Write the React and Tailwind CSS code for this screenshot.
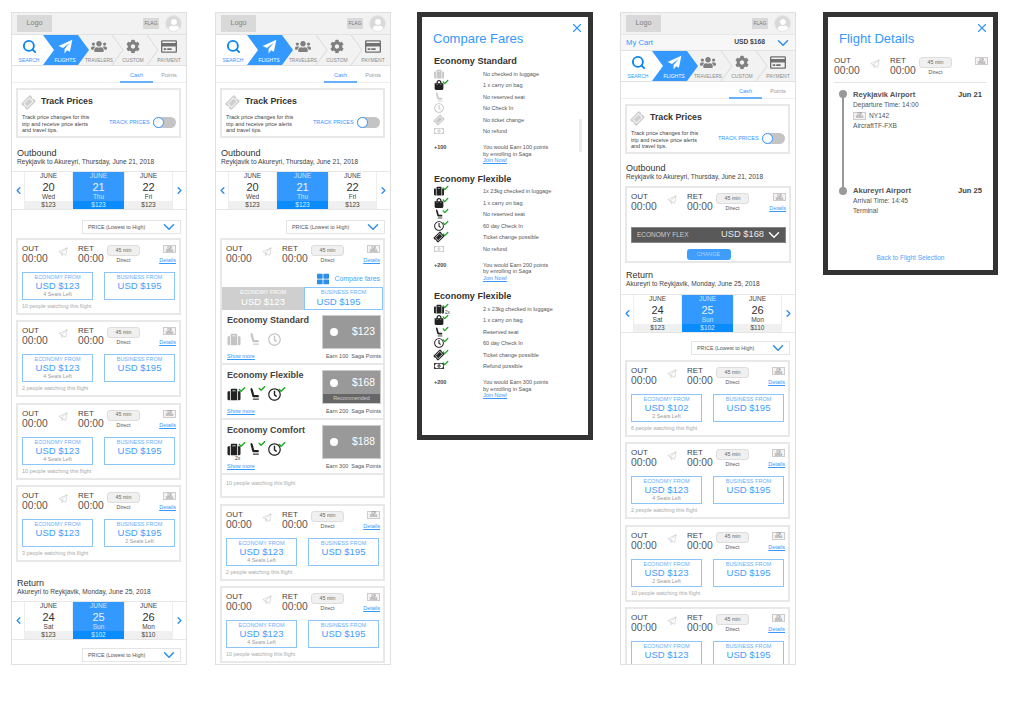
import React from "react";
import { Search, X, ChevronDown, ChevronLeft, ChevronRight } from "lucide-react";
import { FaUsers, FaCog, FaRegCreditCard, FaSuitcase, FaShoppingBag, FaRegClock, FaTicketAlt, FaRegMoneyBillAlt, FaCheck, FaUser, FaThLarge } from "react-icons/fa";

const PlaneFill = ({ className }) => (
  <svg viewBox="0 0 24 24" className={className} fill="currentColor"><path d="M23 1 L1 11 L8 14.5 L19 6 L10.5 16 L10.5 23 L14.5 18 L19 20.5 Z" /></svg>
);
const PlaneLine = ({ className }) => (
  <svg viewBox="0 0 24 24" className={className} fill="none" stroke="currentColor" strokeWidth="1.4" strokeLinejoin="round"><path d="M22 2 L2 11 L8 14 L18.5 20 Z M22 2 L8 14 L10 21 L13 16.5" /></svg>
);
const Seat = ({ className }) => (
  <svg viewBox="0 0 24 24" className={className} fill="currentColor">
    <path d="M6 1 C7.5 1 8.5 2.5 9 4.5 L11.5 14 L18 14 C20 14 20.5 16 19.5 18 L10.5 18 C9 18 8.3 17 8 16 L4.8 4.5 C4.4 2.8 5 1 6 1 Z" />
    <path d="M9 20.5 H20 V22.5 H9 Z" />
  </svg>
);

function Header() {
  return (
    <div className="flex items-center h-[21px] bg-[#f2f2f2] pl-[5px] pr-[4px]">
      <div className="w-[35px] h-[17px] bg-[#d9d9d9] flex items-center justify-center text-[7.2px] text-[#808080]">Logo</div>
      <div className="ml-auto w-[16px] h-[11px] bg-[#d9d9d9] flex items-center justify-center text-[5px] text-[#777]">FLAG</div>
      <div className="ml-[6px] w-[17px] h-[17px] rounded-full bg-[#d9d9d9] border border-[#e8e8e8] flex items-end justify-center overflow-hidden">
        <FaUser className="w-[12px] h-[12px] text-white" />
      </div>
    </div>
  );
}

function Cart() {
  return (
    <div className="flex items-center h-[16px] bg-[#f7f7f7] pl-[5px] pr-[3px] border-t border-[#e6e6e6]">
      <span className="text-[7.7px] text-[#3399ff]">My Cart</span>
      <span className="ml-auto text-[6.7px] font-bold text-[#444]">USD $168</span>
      <ChevronDown className="ml-[9px] w-[18px] h-[18px] shrink-0 text-[#2e8fe8]" strokeWidth={2} />
    </div>
  );
}

const stepCell = "flex flex-col items-center relative z-10 whitespace-nowrap pt-[4px]";
function Steps() {
  return (
    <div className="relative h-[32px] bg-[#f2f2f2] border-y border-[#e2e2e2] flex">
      <svg viewBox="0 0 174 30" preserveAspectRatio="none" className="absolute inset-0 w-full h-full" fill="none">
        <polygon points="0,0 31,0 42,15 31,30 0,30" fill="#fff" />
        <polygon points="31,0 66,0 77,15 66,30 31,30 42,15" fill="#3399ff" />
        <polyline points="100,0 111,15 100,30" stroke="#d4d4d4" strokeWidth="0.8" />
        <polyline points="135,0 146,15 135,30" stroke="#d4d4d4" strokeWidth="0.8" />
      </svg>
      <div className={`${stepCell} w-[34px]`}>
        <Search className="w-[15px] h-[15px] text-[#0a84f0]" strokeWidth={3} />
        <span className="text-[5px] mt-[3px] text-[#3399ff]">SEARCH</span>
      </div>
      <div className={`${stepCell} w-[38px]`}>
        <PlaneFill className="w-[15px] h-[15px] text-white" />
        <span className="text-[5px] mt-[3px] text-white">FLIGHTS</span>
      </div>
      <div className={`${stepCell} w-[30px]`}>
        <FaUsers className="w-[16px] h-[15px] text-[#808080]" />
        <span className="text-[4.8px] mt-[3px] text-[#8a8a8a]">TRAVELERS</span>
      </div>
      <div className={`${stepCell} w-[38px]`}>
        <FaCog className="w-[14px] h-[15px] text-[#808080]" />
        <span className="text-[5px] mt-[3px] text-[#8a8a8a]">CUSTOM</span>
      </div>
      <div className={`${stepCell} w-[34px]`}>
        <FaRegCreditCard className="w-[16px] h-[15px] text-[#707070]" />
        <span className="text-[5px] mt-[3px] text-[#8a8a8a]">PAYMENT</span>
      </div>
    </div>
  );
}

function Tabs() {
  return (
    <div className="flex justify-end h-[16px] border-b border-[#efefef] mt-[1px] pr-[1px]">
      <div className="w-[33px] h-[16px] border-b-2 border-[#66b0fb] text-[5.6px] text-[#3399ff] text-center pt-[4px]">Cash</div>
      <div className="w-[32px] text-[5.6px] text-[#999] text-center pt-[4px]">Points</div>
    </div>
  );
}

function Track({ className }) {
  return (
    <div className={`mx-[4px] w-[165px] h-[50px] border-2 border-[#e8e8e8] pl-[4px] pr-[3px] pt-[5px] ${className}`}>
      <div className="flex items-center h-[14px]">
        <FaTicketAlt className="w-[13px] h-[13px] text-[#cfcfcf] -rotate-45" />
        <span className="ml-[6px] text-[8.8px] font-bold text-[#333]">Track Prices</span>
      </div>
      <div className="flex items-start mt-[5px]">
        <p className="w-[74px] text-[5.5px] leading-[6.5px] text-[#444]">Track price changes for this trip and receive price alerts and travel tips.</p>
        <span className="ml-[13px] mt-[4px] text-[5.5px] text-[#3399ff] whitespace-nowrap">TRACK PRICES</span>
        <div className="ml-auto mt-[3px] w-[23px] h-[11px] bg-[#c4c4c4] rounded-full relative">
          <div className="absolute left-0 top-0 w-[11px] h-[11px] rounded-full bg-white border border-[#3399ff]" />
        </div>
      </div>
    </div>
  );
}

function Heading({ title, sub, className }) {
  return (
    <div className={`pl-[5px] ${className}`}>
      <div className="text-[9px] leading-[10px] text-[#333]">{title}</div>
      <div className="text-[6.6px] leading-[8px] text-[#444]">{sub}</div>
    </div>
  );
}

function Strip({ days, className }) {
  return (
    <div className={`flex h-[38px] border-t border-[#e6e6e6] shadow-[0_1px_0_#e6e6e6] ${className}`}>
      <div className="w-[12px] flex items-center justify-center"><ChevronLeft className="w-[11px] h-[11px] text-[#2e8fe8]" strokeWidth={3} /></div>
      {days.map((d) => (
        <div key={d.n} className={`flex flex-col items-center ${d.on ? "w-[51px] bg-[#3399ff] text-[#cfe6ff]" : "w-[49px] text-[#444] border-x border-[#eee]"}`}>
          <div className="text-[6.5px] leading-[8px]">JUNE</div>
          <div className={`text-[11px] leading-[12px] mt-[1px] ${d.on ? "text-[#eaf4ff]" : "text-[#333]"}`}>{d.n}</div>
          <div className="text-[6.5px] leading-[8px]">{d.w}</div>
          <div className={`w-full text-center text-[6.5px] leading-[8px] ${d.on ? "bg-[#0a8cff] text-[#d8ecff]" : "bg-[#f0f0f0] text-[#444]"}`}>{d.p}</div>
        </div>
      ))}
      <div className="w-[13px] flex items-center justify-center"><ChevronRight className="w-[11px] h-[11px] text-[#2e8fe8]" strokeWidth={3} /></div>
    </div>
  );
}

function Sort({ className }) {
  return (
    <div className={`ml-auto mr-[5px] w-[99px] h-[14px] border border-[#e4e4e4] flex items-center pl-[5px] pr-[2px] ${className}`}>
      <span className="text-[5.4px] text-[#555] whitespace-nowrap">PRICE (Lowest to High)</span>
      <ChevronDown className="ml-auto w-[18px] h-[18px] shrink-0 text-[#2e8fe8]" strokeWidth={2} />
    </div>
  );
}

function LogoBox({ className = "" }) {
  return (
    <div className={`w-[13px] h-[8px] border border-[#ccc] bg-[#f4f4f4] text-[2.8px] leading-[3px] text-[#666] text-center pt-[0.5px] ${className}`}>ICE<br />WING</div>
  );
}

function Times({ details = true }) {
  return (
    <div className="flex">
      <div className="w-[34px]">
        <div className="text-[8px] leading-[9px] text-[#444]">OUT</div>
        <div className="text-[10.3px] leading-[12px] text-[#555]">00:00</div>
      </div>
      <div className="w-[22px] pl-[2px] pt-[3px]"><PlaneLine className="w-[10px] h-[10px] text-[#c4c4c4]" /></div>
      <div className="w-[29px]">
        <div className="text-[8px] leading-[9px] text-[#444]">RET</div>
        <div className="text-[10.3px] leading-[12px] text-[#555]">00:00</div>
      </div>
      <div className="w-[33px] flex flex-col items-center pt-[1px]">
        <div className="w-[33px] h-[11px] rounded-[3px] bg-[#f0f0f0] border border-[#ddd] text-[5.3px] text-[#666] flex items-center justify-center">45 min</div>
        <div className="text-[5.3px] leading-[7px] mt-[1px] text-[#555]">Direct</div>
      </div>
      <div className="ml-auto flex flex-col items-end pt-[1px]">
        <LogoBox />
        {details && <div className="text-[5.5px] leading-[7px] mt-[4px] text-[#3399ff] underline">Details</div>}
      </div>
    </div>
  );
}

function Fare({ label, price, seats }) {
  return (
    <div className="w-[71px] h-[28px] border-[1.5px] border-[#8cc4fc] text-center pt-[1px]">
      <div className="text-[5.5px] leading-[7px] text-[#66b0fb]">{label}</div>
      <div className="text-[9.5px] leading-[10px] text-[#3f9dfb]">{price}</div>
      {seats && <div className="text-[5.3px] leading-[7px] text-[#999]">{seats}</div>}
    </div>
  );
}

function Flight({ eco = "USD $123", ecoSeats = "4 Seats Left", busSeats, people }) {
  return (
    <div className="mx-[4px] w-[165px] h-[77px] border-2 border-[#e8e8e8] pl-[4px] pr-[3px] pt-[4px] shrink-0">
      <Times />
      <div className="flex gap-[11px] mt-[7px]">
        <Fare label="ECONOMY FROM" price={eco} seats={ecoSeats} />
        <Fare label="BUSINESS FROM" price="USD $195" seats={busSeats} />
      </div>
      {people && <div className="text-[5.4px] leading-[8px] mt-[2px] text-[#aaa] whitespace-nowrap">{people}</div>}
    </div>
  );
}

const Checked = ({ children }) => (
  <span className="relative inline-flex">
    {children}
    <FaCheck className="absolute -right-[5px] -top-[2px] w-[8px] h-[7px] text-[#17a81f]" />
  </span>
);

function FareRow({ name, price, earn, on, rec, two }) {
  const c = on ? "text-[#222]" : "text-[#c4c4c4]";
  const W = on ? Checked : React.Fragment;
  return (
    <div className="flex h-[55px] border-b-2 border-[#e8e8e8] pl-[5px] pr-[2px]">
      <div className="flex-1 pt-[5px]">
        <div className="text-[9px] leading-[10px] font-bold text-[#444] whitespace-nowrap">{name}</div>
        <div className="flex items-center gap-[7px] mt-[7px] h-[14px] relative">
          <W><FaSuitcase className={`w-[14px] h-[13px] ${c}`} /></W>
          <W><Seat className={`w-[13px] h-[14px] ${c}`} /></W>
          <W><FaRegClock className={`w-[13px] h-[13px] ${c}`} /></W>
          {two && <span className="absolute left-[8px] top-[13px] text-[5px] text-[#333]">2x</span>}
        </div>
        <div className="text-[5.5px] leading-[7px] mt-[7px] text-[#3399ff] underline">Show more</div>
      </div>
      <div className="w-[59px] flex flex-col pt-[5px]">
        <div className="w-[59px] h-[34px] bg-[#999] border border-[#ccc] flex flex-col">
          <div className="flex-1 flex items-center pl-[7px]">
            <div className="w-[8px] h-[8px] rounded-full bg-white" />
            <div className="ml-auto pr-[5px] text-[10.3px] text-white">{price}</div>
          </div>
          {rec && <div className="h-[9px] bg-[#666] text-[5.4px] leading-[9px] text-[#ccc] text-center">Recommended</div>}
        </div>
        <div className="text-[5.5px] leading-[7px] mt-[4px] text-[#555] text-right whitespace-nowrap -ml-[10px]">{earn}&nbsp; Saga Points</div>
      </div>
    </div>
  );
}

function Expanded() {
  return (
    <div className="mx-[4px] w-[165px] h-[260px] border-2 border-[#e8e8e8] pt-[4px] shrink-0">
      <div className="pl-[4px] pr-[3px]"><Times /></div>
      <div className="flex items-center justify-end h-[12px] mt-[8px] pr-[3px] gap-[5px]">
        <FaThLarge className="w-[12px] h-[12px] text-[#2e8fe8]" />
        <span className="text-[6.9px] text-[#4aa3fb]">Compare fares</span>
      </div>
      <div className="flex h-[23px] mt-[2px]">
        <div className="w-[82px] bg-[#cfcfcf] text-center text-white">
          <div className="text-[5.5px] leading-[8px] pt-[1px]">ECONOMY FROM</div>
          <div className="text-[9.5px] leading-[11px]">USD $123</div>
        </div>
        <div className="flex-1 border-[1.5px] border-[#8cc4fc] text-center">
          <div className="text-[5.5px] leading-[8px] text-[#66b0fb]">BUSINESS FROM</div>
          <div className="text-[9.5px] leading-[11px] text-[#3f9dfb] pr-[10px]">USD $195</div>
        </div>
      </div>
      <FareRow name="Economy Standard" price="$123" earn="Earn 100" />
      <FareRow name="Economy Flexible" price="$168" earn="Earn 200" on rec />
      <FareRow name="Economy Comfort" price="$188" earn="Earn 300" on two />
      <div className="text-[5.4px] leading-[8px] mt-[4px] pl-[4px] text-[#aaa]">10 people watching this flight</div>
    </div>
  );
}

const Frame = ({ children, className }) => (
  <div className={`w-[176px] h-[653px] border border-[#e0e0e0] overflow-hidden shrink-0 ${className}`}>{children}</div>
);

const outDays = [
  { n: 20, w: "Wed", p: "$123" },
  { n: 21, w: "Thu", p: "$123", on: true },
  { n: 22, w: "Fri", p: "$123" },
];
const retDays = [
  { n: 24, w: "Sat", p: "$123" },
  { n: 25, w: "Sun", p: "$102", on: true },
  { n: 26, w: "Mon", p: "$110" },
];

function Modal({ className, height, title, children }) {
  return (
    <div className={`border-[5px] border-[#333] bg-white relative shrink-0 ${height} ${className}`}>
      <X className="absolute right-[4px] top-[4px] w-[14px] h-[14px] text-[#3399ff]" strokeWidth={2} />
      <div className="text-[13px] leading-[17px] text-[#3399ff] pt-[13px] pl-[11px] box-content">{title}</div>
      {children}
    </div>
  );
}

function IconSlot({ icon: I, on, note, rotate }) {
  const c = on ? "text-[#222]" : "text-[#c8c8c8]";
  return (
    <span className="relative inline-flex w-[14px] h-[10px] items-center">
      <I className={`w-[10px] h-[10px] ${c} ${rotate ? "-rotate-45" : ""}`} />
      {on && <FaCheck className="absolute left-[8px] -top-[1px] w-[7px] h-[6px] text-[#17a81f]" />}
      {note && <span className="absolute left-[11px] top-[6px] text-[4.5px] text-[#333]">2x</span>}
    </span>
  );
}

function CompareSection({ title, rows, plus, earn, className }) {
  return (
    <div className={`pl-[12px] ${className}`}>
      <div className="text-[9.1px] leading-[11px] font-bold text-[#333]">{title}</div>
      <div className="mt-[1px]">
        {rows.map(([icon, text, on, rot, note], i) => (
          <div key={i} className="flex items-center h-[11.5px]">
            <div className="w-[49px] flex"><IconSlot icon={icon} on={on} rotate={rot} note={note} /></div>
            <span className="text-[5.5px] text-[#555] whitespace-nowrap">{text}</span>
          </div>
        ))}
      </div>
      <div className="flex mt-[7px]">
        <div className="w-[49px] text-[5.5px] leading-[6.5px] font-bold text-[#444]">{plus}</div>
        <div className="text-[5.5px] leading-[6.5px] text-[#555]">
          You would Earn {earn} points<br />by enrolling in Saga<br />
          <span className="text-[#3399ff] underline">Join Now!</span>
        </div>
      </div>
    </div>
  );
}

export default function App() {
  return (
    <div className="font-['Liberation_Sans',sans-serif] bg-white w-[1010px] h-[702px] overflow-hidden flex items-start pt-[12px] pl-[11px]">
      {/* Screen 1 */}
      <Frame>
        <Header />
        <Steps />
        <Tabs />
        <Track className="mt-[5px]" />
        <Heading className="mt-[10px]" title="Outbound" sub="Reykjavik to Akureyri, Thursday, June 21, 2018" />
        <Strip days={outDays} className="mt-[5px]" />
        <Sort className="mt-[11px]" />
        <div className="flex flex-col gap-[5.4px] mt-[4px]">
          <Flight people="10 people watching this flight" />
          <Flight people="2 people watching this flight" />
          <Flight people="10 people watching this flight" />
          <Flight people="3 people watching this flight" ecoSeats={null} busSeats="2 Seats Left" />
        </div>
        <Heading className="mt-[16px]" title="Return" sub="Akureyri to Reykjavik, Monday, June 25, 2018" />
        <Strip days={retDays} className="mt-[5px]" />
        <Sort className="mt-[9px]" />
      </Frame>

      {/* Screen 2 */}
      <Frame className="ml-[28px]">
        <Header />
        <Steps />
        <Tabs />
        <Track className="mt-[5px]" />
        <Heading className="mt-[10px]" title="Outbound" sub="Reykjavik to Akureyri, Thursday, June 21, 2018" />
        <Strip days={outDays} className="mt-[5px]" />
        <Sort className="mt-[11px]" />
        <div className="flex flex-col gap-[5.5px] mt-[4px]">
          <Expanded />
          <Flight people="2 people watching this flight" />
          <Flight people="10 people watching this flight" />
        </div>
      </Frame>

      {/* Compare fares */}
      <Modal className="ml-[26px] w-[176px]" height="h-[428px]" title="Compare Fares">
        <div className="absolute right-[6px] top-[102px] w-[3px] h-[33px] bg-[#ececec]" />
        <CompareSection
          className="mt-[9px]"
          title="Economy Standard"
          plus="+100"
          earn="100"
          rows={[
            [FaSuitcase, "No checked in luggage"],
            [FaShoppingBag, "1 x carry on bag", true],
            [Seat, "No reserved seat"],
            [FaRegClock, "No Check In"],
            [FaTicketAlt, "No ticket change", false, true],
            [FaRegMoneyBillAlt, "No refund"],
          ]}
        />
        <CompareSection
          className="mt-[10px]"
          title="Economy Flexible"
          plus="+200"
          earn="200"
          rows={[
            [FaSuitcase, "1x 23kg checked in luggage", true],
            [FaShoppingBag, "1 x carry on bag", true],
            [Seat, "No reserved seat", true],
            [FaRegClock, "60 day Check In", true],
            [FaTicketAlt, "Ticket change possible", true, true],
            [FaRegMoneyBillAlt, "No refund"],
          ]}
        />
        <CompareSection
          className="mt-[10px]"
          title="Economy Flexible"
          plus="+200"
          earn="300"
          rows={[
            [FaSuitcase, "2 x 23kg checked in luggage", true, false, true],
            [FaShoppingBag, "1 x carry on bag", true],
            [Seat, "Reserved seat", true],
            [FaRegClock, "60 day Check In", true],
            [FaTicketAlt, "Ticket change possible", true, true],
            [FaRegMoneyBillAlt, "Refund possible", true],
          ]}
        />
      </Modal>

      {/* Screen 4 */}
      <Frame className="ml-[27px]">
        <Header />
        <Cart />
        <Steps />
        <Tabs />
        <Track className="mt-[5px]" />
        <Heading className="mt-[9px]" title="Outbound" sub="Reykjavik to Akureyri, Thursday, June 21, 2018" />
        <div className="mx-[4px] mt-[5px] w-[166px] h-[77px] border-2 border-[#e8e8e8] pl-[4px] pr-[3px] pt-[4px]">
          <Times />
          <div className="flex items-center h-[16px] mt-[14px] bg-[#595959] border border-[#888] pl-[5px] pr-[2px]">
            <span className="text-[6.5px] text-[#ccc]">ECONOMY FLEX</span>
            <span className="ml-auto text-[9.3px] text-[#e8e8e8]">USD $168</span>
            <ChevronDown className="ml-[1px] w-[18px] h-[18px] shrink-0 text-white" strokeWidth={2} />
          </div>
          <div className="mx-auto mt-[6px] w-[44px] h-[11px] rounded-[3px] bg-[#3f9dfb] text-[5.5px] leading-[11px] text-[#a9d4ff] text-center">CHANGE</div>
        </div>
        <Heading className="mt-[7px]" title="Return" sub="Akureyri to Reykjavik, Monday, June 25, 2018" />
        <Strip days={retDays} className="mt-[6px]" />
        <Sort className="mt-[9px]" />
        <div className="flex flex-col gap-[5.4px] mt-[5px]">
          <Flight eco="USD $102" ecoSeats="2 Seats Left" people="6 people watching this flight" />
          <Flight people="2 people watching this flight" />
          <Flight ecoSeats="2 Seats Left" people="10 people watching this flight" />
          <Flight ecoSeats={null} />
        </div>
      </Frame>

      {/* Flight details */}
      <Modal className="ml-[27px] w-[175px]" height="h-[263px]" title="Flight Details">
        <div className="pl-[6px] pr-[5px] mt-[9px]"><Times details={false} /></div>
        <div className="mx-[6px] mt-[5px] h-[1px] bg-[#e4e4e4]" />
        <div className="flex pl-[11px] pr-[11px] mt-[7px]">
          <div className="relative w-[8px] h-[105px] shrink-0 flex flex-col items-center justify-between">
            <div className="absolute left-[3px] top-[4px] w-[2px] h-[97px] bg-[#999]" />
            <div className="w-[8px] h-[8px] rounded-full bg-[#999] relative" />
            <div className="w-[8px] h-[8px] rounded-full bg-[#999] relative" />
          </div>
          <div className="flex-1 pl-[6px] flex flex-col justify-between h-[126px]">
            <div>
              <div className="flex text-[7.6px] leading-[9px] font-bold text-[#555]"><span>Reykjavik Airport</span><span className="ml-auto text-[#444]">Jun 21</span></div>
              <div className="text-[6.6px] leading-[10px] mt-[1px] text-[#555]">Departure Time: 14:00</div>
              <div className="flex items-center h-[11px] text-[6.6px] text-[#555]"><LogoBox className="mr-[3px]" />NY142</div>
              <div className="text-[6.6px] leading-[10px] text-[#555]">AircraftTF-FXB</div>
            </div>
            <div>
              <div className="flex text-[7.6px] leading-[9px] font-bold text-[#555]"><span>Akureyri Airport</span><span className="ml-auto text-[#444]">Jun 25</span></div>
              <div className="text-[6.6px] leading-[10px] mt-[1px] text-[#555]">Arrival Time: 14:45</div>
              <div className="text-[6.6px] leading-[10px] text-[#555]">Terminal</div>
            </div>
          </div>
        </div>
        <div className="text-center text-[6.5px] leading-[8px] text-[#4aa3fb] mt-[38px]">Back to Flight Selection</div>
      </Modal>
    </div>
  );
}
